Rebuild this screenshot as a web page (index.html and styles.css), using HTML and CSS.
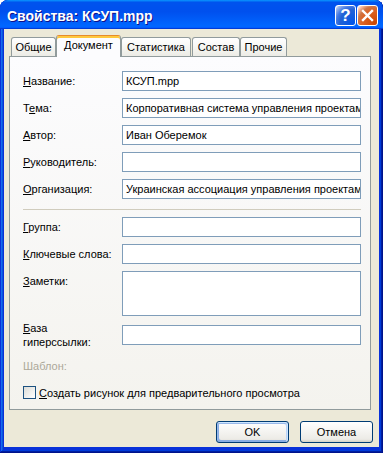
FILE: index.html
```html
<!DOCTYPE html>
<html lang="ru">
<head>
    <meta charset="UTF-8">
    <meta name="viewport" content="width=device-width, initial-scale=1.0">
    <title>Свойства: КСУП.mpp</title>
    <link rel="stylesheet" href="styles.css">
</head>
<body>
    <div class="window">
        <div class="titlebar">
            <span class="title">Свойства: КСУП.mpp</span>
            <div class="caption-btns">
                <div class="cap-btn help">?</div>
                <div class="cap-btn close">
                    <svg width="13" height="13" viewBox="0 0 13 13">
                        <path d="M2 2 L11 11 M11 2 L2 11" stroke="#fff" stroke-width="2.4" stroke-linecap="square"/>
                    </svg>
                </div>
            </div>
        </div>

        <div class="client">
            <div class="tabs">
                <div class="tab tab-general">Общие</div>
                <div class="tab tab-doc active">Документ</div>
                <div class="tab tab-stats">Статистика</div>
                <div class="tab tab-contents">Состав</div>
                <div class="tab tab-other">Прочие</div>
            </div>

            <div class="tabpage">
                <div class="field">
                    <label><u>Н</u>азвание:</label>
                    <div class="input">КСУП.mpp</div>
                </div>
                <div class="field">
                    <label>Т<u>е</u>ма:</label>
                    <div class="input">Корпоративная система управления проектами</div>
                </div>
                <div class="field">
                    <label><u>А</u>втор:</label>
                    <div class="input">Иван Оберемок</div>
                </div>
                <div class="field">
                    <label><u>Р</u>уководитель:</label>
                    <div class="input"></div>
                </div>
                <div class="field">
                    <label><u>О</u>рганизация:</label>
                    <div class="input">Украинская ассоциация управления проектами</div>
                </div>

                <div class="separator"></div>

                <div class="field">
                    <label><u>Г</u>руппа:</label>
                    <div class="input"></div>
                </div>
                <div class="field">
                    <label><u>К</u>лючевые слова:</label>
                    <div class="input"></div>
                </div>
                <div class="field field-top">
                    <label><u>З</u>аметки:</label>
                    <div class="input input-notes"></div>
                </div>
                <div class="field field-link">
                    <label class="two-line"><u>Б</u>аза гиперссылки:</label>
                    <div class="input"></div>
                </div>
                <div class="field field-template">
                    <label class="disabled">Шаблон:</label>
                </div>
                <div class="check-row">
                    <span class="checkbox"></span>
                    <span><u>С</u>оздать рисунок для предварительного просмотра</span>
                </div>
            </div>

            <div class="actions">
                <button class="button default">OK</button>
                <button class="button">Отмена</button>
            </div>
        </div>
    </div>
</body>
</html>
```

FILE: styles.css
```css
* {
    margin: 0;
    padding: 0;
    box-sizing: border-box;
}

body {
    font-family: 'Liberation Sans', Arial, sans-serif;
    font-size: 11px;
    color: #000;
    background: #fff;
}

.window {
    width: 383px;
    height: 453px;
    display: flex;
    flex-direction: column;
    padding: 0 4px 6px;
    background: #0831d9;
    border-radius: 8px 8px 0 0;
    overflow: hidden;
    box-shadow: inset -1px -1px #00138c, inset 1px 1px #0831d9,
                inset -2px -2px #001ea0, inset 2px 2px #166aee,
                inset -3px -3px #003bda, inset 3px 3px #0855dd;
}

.titlebar {
    height: 29px;
    margin: 0 -4px;
    padding: 0 5px 0 7px;
    display: flex;
    align-items: center;
    border-radius: 8px 8px 0 0;
    background: linear-gradient(180deg, #0997ff, #0053ee 8%, #0050ee 40%, #06f 88%, #06f 93%, #005bff 95%, #003dd7 96%, #003dd7);
}

.title {
    flex: 1;
    color: #fff;
    font-size: 14px;
    font-weight: bold;
    text-shadow: 1px 1px #0f1089;
    padding-top: 3px;
}

.caption-btns {
    display: flex;
    gap: 1px;
    align-self: flex-start;
    margin-top: 5px;
}

.cap-btn {
    width: 21px;
    height: 21px;
    border: 1px solid #fff;
    border-radius: 3px;
    display: flex;
    align-items: center;
    justify-content: center;
    color: #fff;
    font-size: 17px;
    font-weight: bold;
}

.cap-btn.help {
    background: radial-gradient(circle at 90% 90%, #0054e9 0, #2263d5 55%, #4479e4 70%, #a3bbec 90%, #fff 100%);
}

.cap-btn.close {
    background: radial-gradient(circle at 90% 90%, #cc4600 0, #dc6527 55%, #cd7546 70%, #ffccb2 90%, #fff 100%);
}

.client {
    flex: 1;
    display: flex;
    flex-direction: column;
    padding: 6px 8px 4px 5px;
    background: #ece9d8;
}

.tabs {
    height: 21px;
    display: flex;
    align-items: flex-end;
    padding-left: 2px;
    position: relative;
    z-index: 1;
}

.tab {
    height: 19px;
    padding-top: 2px;
    border: 1px solid #919b9c;
    border-bottom: none;
    border-radius: 3px 3px 0 0;
    background: linear-gradient(180deg, #fff, #fafaf9 30%, #f0f0ea 80%, #ecebe6);
    line-height: 15px;
    text-align: center;
}

.tab.active {
    height: 22px;
    margin-bottom: -1px;
    border-top: 1px solid #e68b2c;
    background: #fcfcfe;
    box-shadow: inset 0 2px #ffc83c;
}

.tab-general { width: 45px; }
.tab-doc { width: 65px; }
.tab-stats { width: 70px; margin-right: 1px; }
.tab-contents { width: 48px; }
.tab-other { width: 47px; }

.tabpage {
    height: 354px;
    padding: 14px 9px 7px 13px;
    display: flex;
    flex-direction: column;
    gap: 7px;
    border: 1px solid #919b9c;
    background: linear-gradient(180deg, #fcfcfe, #f4f3ee);
}

.field {
    display: flex;
    align-items: center;
    min-height: 20px;
}

.field label {
    width: 99px;
    flex-shrink: 0;
}

.field-top {
    align-items: flex-start;
}

.field-top label {
    line-height: 20px;
}

.two-line {
    line-height: 14px;
    padding-right: 40px;
}

.field-link {
    margin-top: 3px;
}

.field-template,
.check-row {
    margin-top: 1px;
}

.disabled {
    color: #aca899;
}

.input {
    width: 239px;
    height: 20px;
    padding: 0 3px;
    border: 1px solid #7f9db9;
    background: #fff;
    line-height: 18px;
    white-space: nowrap;
    overflow: hidden;
}

.input-notes {
    height: 45px;
}

.separator {
    height: 1px;
    margin: 3px 0 0;
    background: #d0ccbd;
}

.check-row {
    height: 20px;
    display: flex;
    align-items: center;
    gap: 3px;
}

.checkbox {
    width: 13px;
    height: 13px;
    border: 1px solid #1c5180;
    background: linear-gradient(135deg, #dcdcd7, #fff);
}

.actions {
    display: flex;
    justify-content: flex-end;
    gap: 11px;
    margin: 11px -2px 0 0;
}

.button {
    width: 73px;
    height: 22px;
    font-family: inherit;
    font-size: 11px;
    color: #000;
    border: 1px solid #003c74;
    border-radius: 3px;
    background: linear-gradient(180deg, #fff, #ecebe6 86%, #d6d0c5);
}

.button.default {
    box-shadow: inset -1px 1px #cee7ff, inset 1px 2px #98b8ea,
                inset -2px 2px #bcd4f6, inset 1px -1px #89ade4,
                inset 2px -2px #89ade4;
}
```
